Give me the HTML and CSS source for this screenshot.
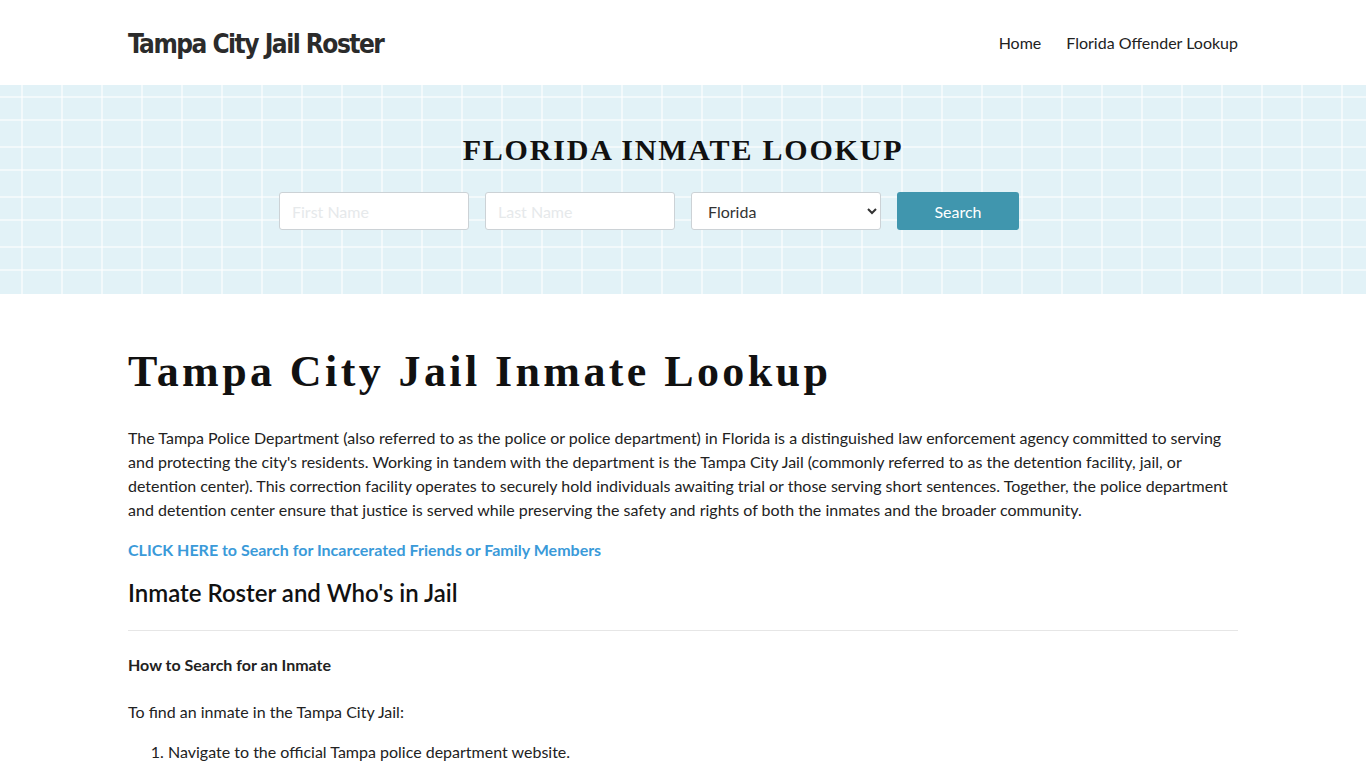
FILE: index.html
```html
<!DOCTYPE html>
<html lang="en">
<head>
<meta charset="utf-8">
<title>Tampa City Jail Roster</title>
<link rel="stylesheet" href="styles.css">
</head>
<body>
<header class="site-header">
  <div class="container header-inner">
    <a class="logo" href="#">Tampa City Jail Roster</a>
    <nav class="nav">
      <a href="#">Home</a>
      <a href="#">Florida Offender Lookup</a>
    </nav>
  </div>
</header>
<section class="banner">
  <h2 class="banner-title">FLORIDA INMATE LOOKUP</h2>
  <div class="container">
    <form class="search">
      <input type="text" placeholder="First Name">
      <input type="text" placeholder="Last Name">
      <select><option>Florida</option></select>
      <button type="button">Search</button>
    </form>
  </div>
</section>
<main class="container content">
  <h1 class="title">Tampa City Jail Inmate Lookup</h1>
  <p>The Tampa Police Department (also referred to as the police or police department) in Florida is a distinguished law enforcement agency committed to serving and protecting the city's residents. Working in tandem with the department is the Tampa City Jail (commonly referred to as the detention facility, jail, or detention center). This correction facility operates to securely hold individuals awaiting trial or those serving short sentences. Together, the police department and detention center ensure that justice is served while preserving the safety and rights of both the inmates and the broader community.</p>
  <p><a class="cta" href="#">CLICK HERE to Search for Incarcerated Friends or Family Members</a></p>
  <h2 class="section-title">Inmate Roster and Who's in Jail</h2>
  <hr>
  <h4 class="sub">How to Search for an Inmate</h4>
  <p class="lead-in">To find an inmate in the Tampa City Jail:</p>
  <ol>
    <li>Navigate to the official Tampa police department website.</li>
  </ol>
</main>
</body>
</html>
```
FILE: styles.css
```css
* { box-sizing: border-box; }
body {
  margin: 0;
  font-family: Lato, "Open Sans", sans-serif;
  font-size: 16px;
  line-height: 24px;
  color: #222;
  background: #fff;
}
.container {
  width: 1110px;
  margin: 0 auto;
}
.site-header { height: 85px; }
.header-inner {
  height: 85px;
  display: flex;
  align-items: center;
  justify-content: space-between;
}
.logo {
  font-family: "DejaVu Sans Condensed", "DejaVu Sans", sans-serif;
  font-stretch: condensed;
  font-weight: bold;
  font-size: 26px;
  color: #2b2b2b;
  text-decoration: none;
  letter-spacing: -1.5px;
  padding-top: 2px;
}
.nav {
  display: flex;
  gap: 25px;
}
.nav a {
  color: #222;
  text-decoration: none;
  font-size: 16px;
}
.banner {
  height: 209px;
  background-color: #e2f2f7;
  background-image:
    repeating-linear-gradient(90deg, transparent 0 21px, rgba(255,255,255,0.55) 21px 23px, transparent 23px 40px),
    linear-gradient(180deg, transparent 0 11px, rgba(255,255,255,0.55) 11px 13px, transparent 13px 34px, rgba(255,255,255,0.55) 34px 36px, transparent 36px 50px);
  background-size: 40px 100%, 100% 50px;
  display: flex;
  flex-direction: column;
  align-items: center;
  padding-top: 48px;
}
.banner-title {
  margin: 0;
  font-family: "Liberation Serif", "Times New Roman", serif;
  font-weight: bold;
  font-size: 30px;
  line-height: 34px;
  letter-spacing: 1.8px;
  color: #111;
}
.search {
  display: flex;
  gap: 16px;
  margin-top: 25px;
  padding-left: 151px;
}
.search input, .search select {
  width: 190px;
  height: 38px;
  border: 1px solid #ccd2d6;
  border-radius: 3px;
  background: #fff;
  font-family: Lato, sans-serif;
  font-size: 16px;
  padding: 0 12px;
  color: #333;
}
.search input::placeholder { color: #e6e9eb; }
.search select { padding-left: 12px; }
.search button {
  width: 122px;
  height: 38px;
  border: 0;
  border-radius: 3px;
  background: #4096ae;
  color: #fff;
  font-family: Lato, sans-serif;
  font-size: 16px;
}
.content { padding-top: 52px; }
.title {
  margin: 0 0 28px;
  font-family: "Liberation Serif", "Times New Roman", serif;
  font-weight: bold;
  font-size: 44px;
  line-height: 52px;
  letter-spacing: 3.4px;
  color: #111;
}
p { margin: 0 0 16px; }
.cta {
  color: #3a9ad9;
  font-weight: bold;
  text-decoration: none;
}
.section-title {
  margin: 0;
  font-weight: 600;
  font-size: 24px;
  line-height: 30px;
  color: #111;
}
hr {
  border: 0;
  border-top: 1px solid #e6e6e6;
  margin: 22px 0 22px;
}
.sub {
  margin: 0 0 23px;
  font-size: 16px;
  font-weight: bold;
}
ol { margin: 0; padding-left: 40px; }
li { margin-bottom: 8px; }
```
